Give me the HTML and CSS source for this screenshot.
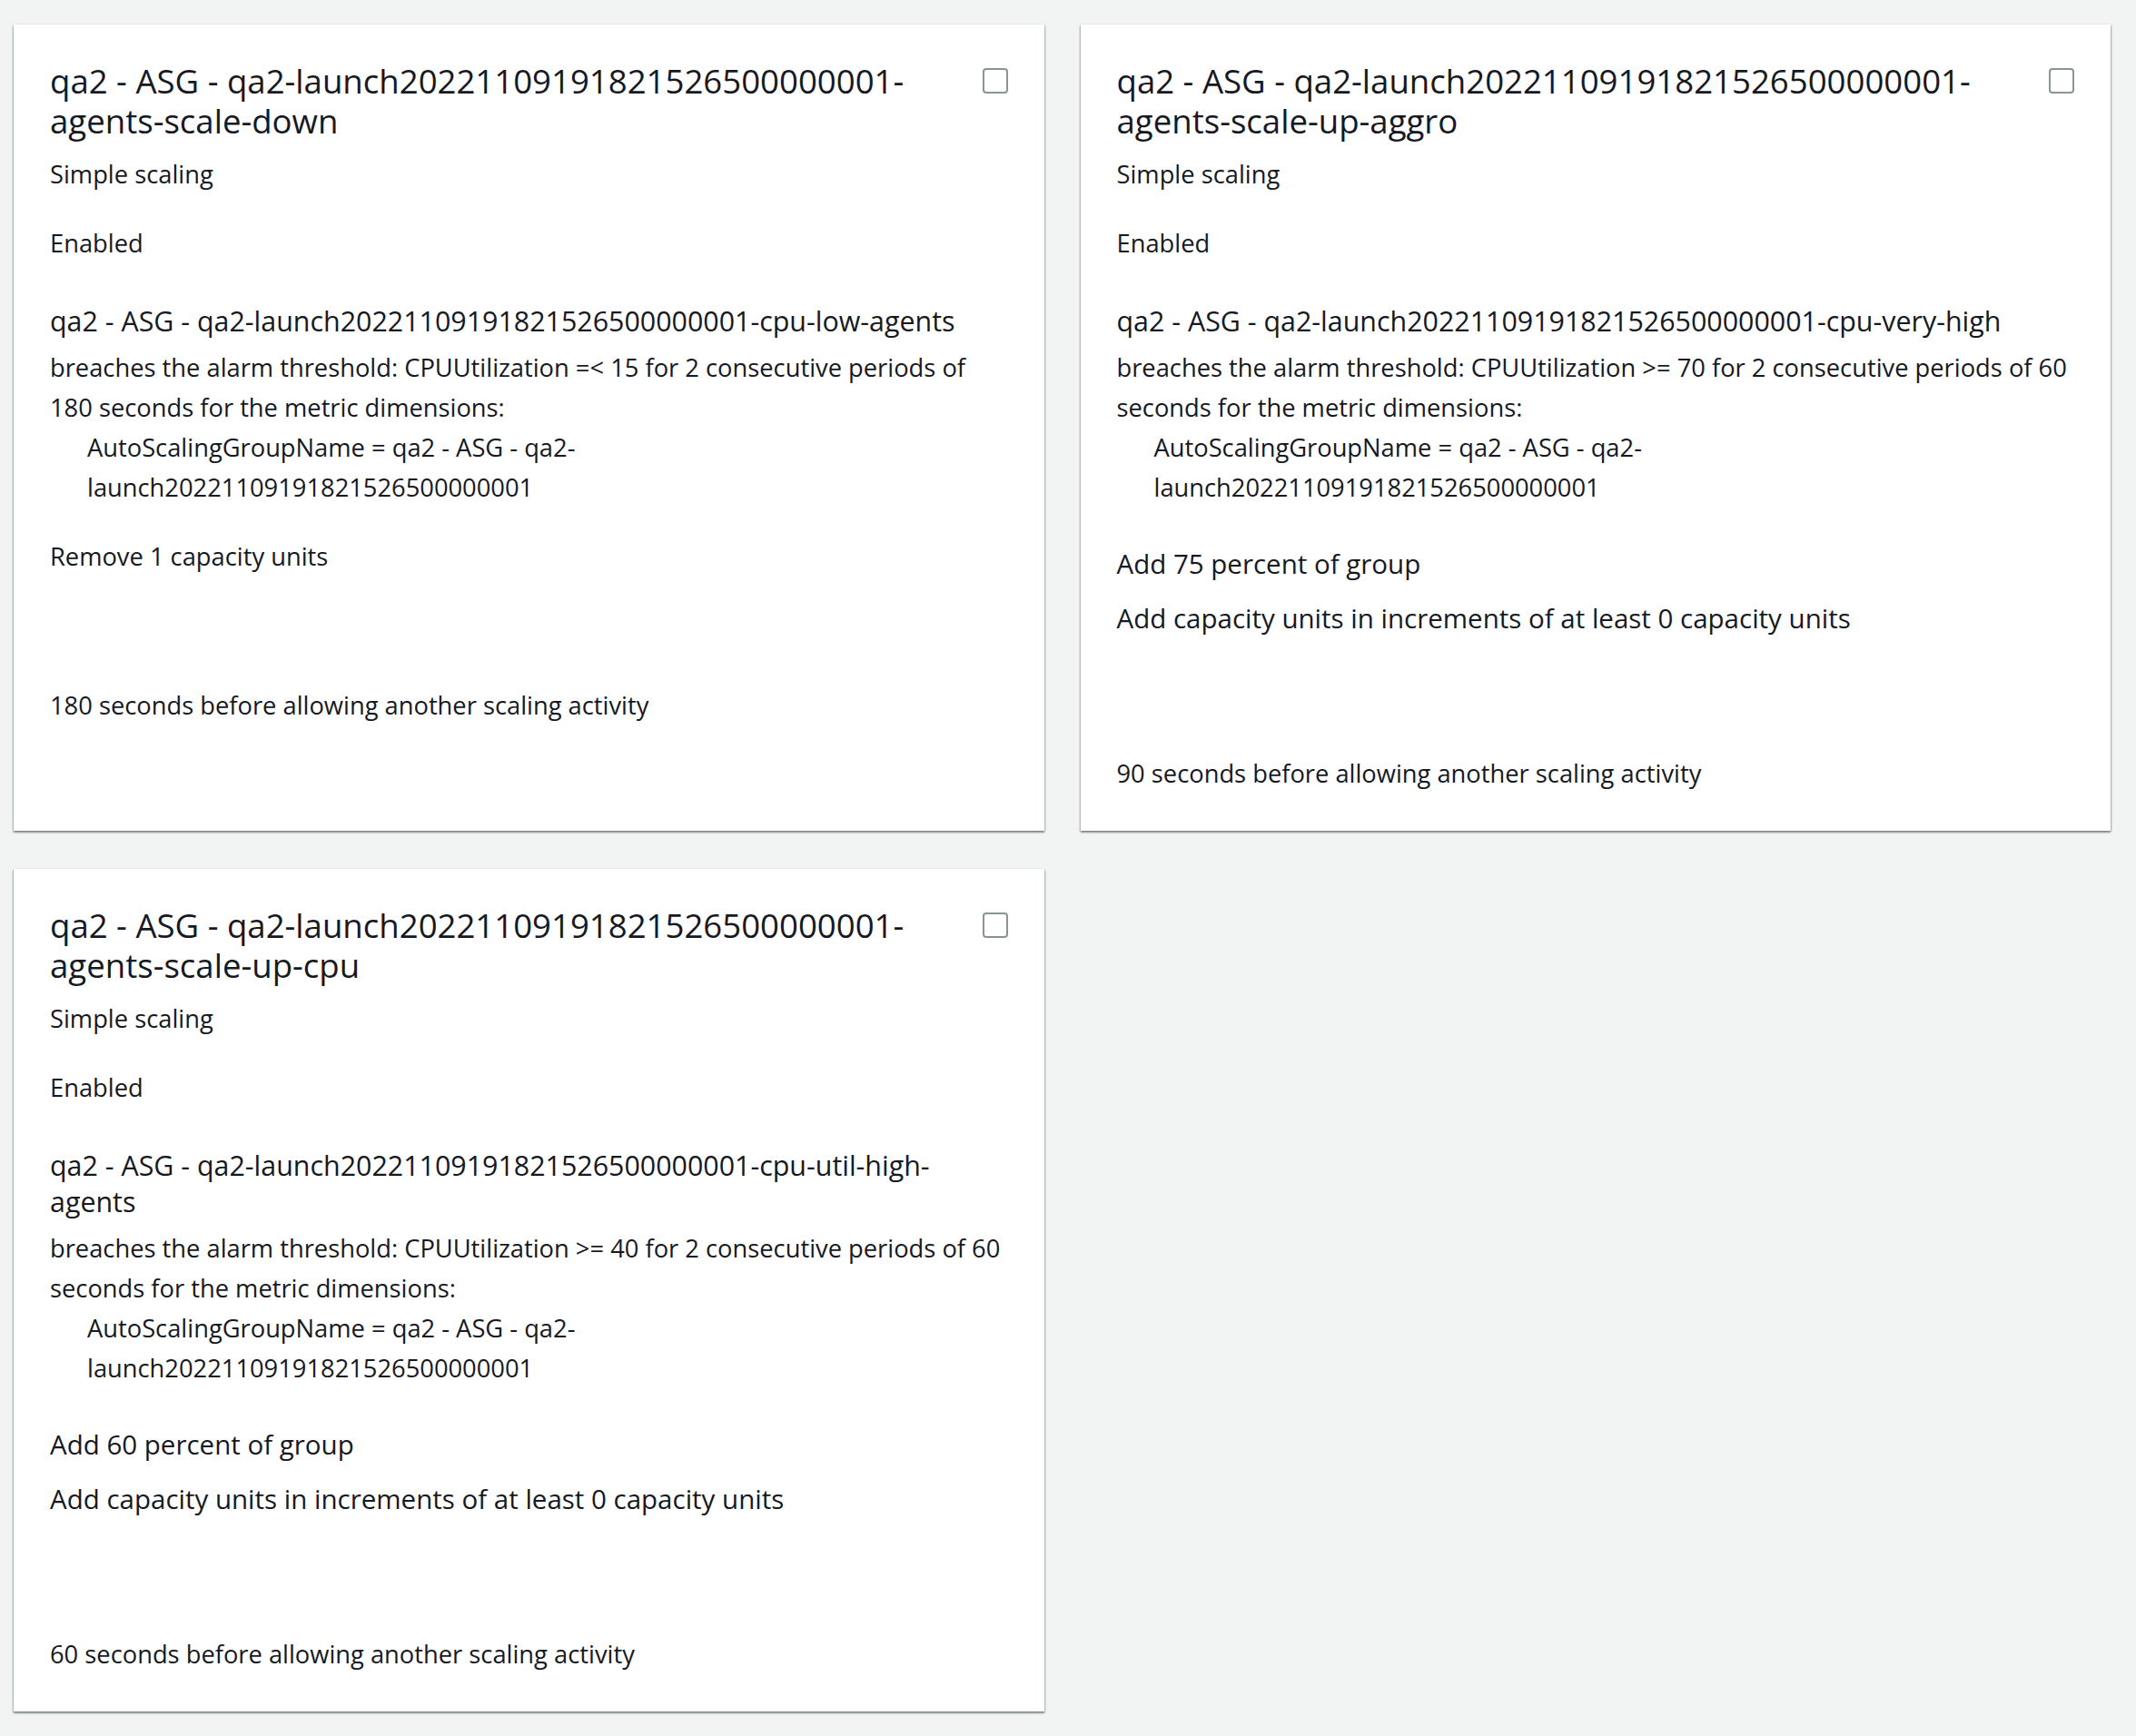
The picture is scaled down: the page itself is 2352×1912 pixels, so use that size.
FILE: index.html
```html
<!DOCTYPE html>
<html lang="en">
<head>
<meta charset="utf-8">
<title>Dynamic scaling policies</title>
<link rel="stylesheet" href="styles.css">
</head>
<body>
<main class="cards">
  <section class="card">
    <div class="card-header">
      <h2 class="card-title">qa2 - ASG - qa2-launch20221109191821526500000001-agents-scale-down</h2>
      <input type="checkbox" class="check" aria-label="Select policy">
    </div>
    <p class="field field-type">Simple scaling</p>
    <p class="field field-state">Enabled</p>
    <p class="field field-alarm">qa2 - ASG - qa2-launch20221109191821526500000001-cpu-low-agents</p>
    <div class="field field-breach">
      <p class="breach-text">breaches the alarm threshold: CPUUtilization =&lt; 15 for 2 consecutive periods of 180 seconds for the metric dimensions:</p>
      <p class="dimension">AutoScalingGroupName = qa2 - ASG - qa2-launch20221109191821526500000001</p>
    </div>
    <p class="field field-step">Remove 1 capacity units</p>
    <p class="field field-cooldown field-cooldown-short">180 seconds before allowing another scaling activity</p>
  </section>

  <section class="card">
    <div class="card-header">
      <h2 class="card-title">qa2 - ASG - qa2-launch20221109191821526500000001-agents-scale-up-aggro</h2>
      <input type="checkbox" class="check" aria-label="Select policy">
    </div>
    <p class="field field-type">Simple scaling</p>
    <p class="field field-state">Enabled</p>
    <p class="field field-alarm">qa2 - ASG - qa2-launch20221109191821526500000001-cpu-very-high</p>
    <div class="field field-breach">
      <p class="breach-text">breaches the alarm threshold: CPUUtilization &gt;= 70 for 2 consecutive periods of 60 seconds for the metric dimensions:</p>
      <p class="dimension">AutoScalingGroupName = qa2 - ASG - qa2-launch20221109191821526500000001</p>
    </div>
    <p class="field field-action">Add 75 percent of group</p>
    <p class="field field-increment">Add capacity units in increments of at least 0 capacity units</p>
    <p class="field field-cooldown">90 seconds before allowing another scaling activity</p>
  </section>

  <section class="card">
    <div class="card-header">
      <h2 class="card-title">qa2 - ASG - qa2-launch20221109191821526500000001-agents-scale-up-cpu</h2>
      <input type="checkbox" class="check" aria-label="Select policy">
    </div>
    <p class="field field-type">Simple scaling</p>
    <p class="field field-state">Enabled</p>
    <p class="field field-alarm">qa2 - ASG - qa2-launch20221109191821526500000001-cpu-util-high-agents</p>
    <div class="field field-breach">
      <p class="breach-text">breaches the alarm threshold: CPUUtilization &gt;= 40 for 2 consecutive periods of 60 seconds for the metric dimensions:</p>
      <p class="dimension">AutoScalingGroupName = qa2 - ASG - qa2-launch20221109191821526500000001</p>
    </div>
    <p class="field field-action">Add 60 percent of group</p>
    <p class="field field-increment">Add capacity units in increments of at least 0 capacity units</p>
    <p class="field field-cooldown">60 seconds before allowing another scaling activity</p>
  </section>
</main>
</body>
</html>
```
FILE: styles.css
```css
html, body {
  margin: 0;
  padding: 0;
}

body {
  background: #f2f3f3;
  color: #16191f;
  font-family: "Open Sans", "Noto Sans", sans-serif;
  font-size: 27.3px;
  line-height: 44px;
  min-height: 100vh;
}

.cards {
  display: grid;
  grid-template-columns: 1fr 1fr;
  column-gap: 40px;
  row-gap: 42px;
  padding: 27px 28px 27px 15px;
  align-items: stretch;
}

.card {
  background: #ffffff;
  padding: 40px 40px 41px 40px;
  box-shadow:
    0 2px 2px 0 rgba(0, 28, 36, 0.35),
    1px 1px 2px 0 rgba(0, 28, 36, 0.18),
    -1px 1px 2px 0 rgba(0, 28, 36, 0.18),
    0 0 1px 0 rgba(0, 28, 36, 0.12);
}

.card-header {
  display: flex;
  align-items: flex-start;
  gap: 20px;
}

.card-title {
  flex: 1;
  margin: 0;
  font-size: 36.6px;
  font-weight: 400;
  line-height: 44px;
  color: #16191f;
}

.check {
  appearance: none;
  -webkit-appearance: none;
  flex: none;
  width: 28px;
  height: 28px;
  margin: 8px 0 0 0;
  border: 2px solid #879596;
  border-radius: 4px;
  background: #ffffff;
  box-sizing: border-box;
}

.field {
  margin: 0;
}

.field p {
  margin: 0;
}

.field-type {
  margin-top: 15px;
}

.field-state {
  margin-top: 32px;
}

.field-alarm {
  margin-top: 44px;
  font-size: 30.4px;
  line-height: 40px;
}

.field-breach {
  margin-top: 9px;
}

.dimension {
  padding-left: 41px;
}

.field-step {
  margin-top: 32px;
}

.field-action {
  margin-top: 40px;
  font-size: 29.5px;
}

.field-increment {
  margin-top: 16px;
  font-size: 29.5px;
}

.field-cooldown {
  margin-top: 127px;
}

.field-cooldown-short {
  margin-top: 120px;
}
```
